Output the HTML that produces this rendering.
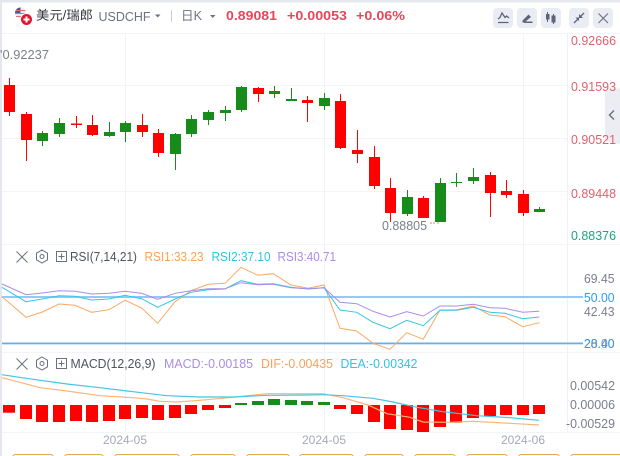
<!DOCTYPE html>
<html><head><meta charset="utf-8"><style>
html,body{margin:0;padding:0;background:#fff}
svg{display:block;font-family:"Liberation Sans","Noto Sans CJK SC",sans-serif}
</style></head><body>
<svg width="620" height="456" viewBox="0 0 620 456" xmlns="http://www.w3.org/2000/svg">
<rect width="620" height="456" fill="#fff"/>
<rect x="0" y="0" width="620" height="2.5" fill="#e4e7ee"/>
<rect x="0" y="0" width="2" height="456" fill="#e4e7ee"/>
<!-- grid -->
<g stroke="#f3f4f8" stroke-width="1" fill="none">
<path d="M2 33.5H620M2 244.5H620M2 352.5H620M2 432.5H620"/>
<path d="M2 85.5H567M2 138.5H567M2 191.5H567"/>
<path d="M125.5 33V432M324.5 33V432M523.5 33V432"/>
</g>
<path d="M567.5 33V432" stroke="#f0f1f5"/>
<!-- header -->
<circle cx="20.5" cy="13" r="5.5" fill="#e9e9f0"/>
<path d="M15 13a5.5 5.5 0 0 1 5.5-5.5v5.5z" fill="#4a5a8c"/>
<path d="M15.5 10.500h10M15 13.500h11M16 16.500h9" stroke="#e0707a" stroke-width="1"/>
<circle cx="26.500" cy="19.500" r="6.500" fill="#fff"/>
<circle cx="26.500" cy="19.500" r="5.500" fill="#e3142d"/>
<path d="M23.500 19.500h6M26.500 16.500v6" stroke="#fff" stroke-width="2"/>
<text x="36" y="19.500" font-size="12.500" fill="#33353d" textLength="57" lengthAdjust="spacingAndGlyphs">美元/瑞郎</text>
<text x="98.500" y="21" font-size="12.500" fill="#6d7280" textLength="52" lengthAdjust="spacingAndGlyphs">USDCHF</text>
<path d="M155 14.500h5.500l-2.750 3z" fill="#6d7280"/>
<path d="M171.500 10V22" stroke="#c9ccd6"/>
<text x="181" y="20" font-size="12.500" fill="#6d7280" textLength="21" lengthAdjust="spacingAndGlyphs">日K</text>
<path d="M210 15h5.500l-2.750 3z" fill="#6d7280"/>
<text x="226" y="20" font-size="12.500" font-weight="700" fill="#e2485a" textLength="51" lengthAdjust="spacingAndGlyphs">0.89081</text>
<text x="287" y="20" font-size="12.500" font-weight="700" fill="#e2485a" textLength="60" lengthAdjust="spacingAndGlyphs">+0.00053</text>
<text x="356" y="20" font-size="12.500" font-weight="700" fill="#e2485a" textLength="49" lengthAdjust="spacingAndGlyphs">+0.06%</text>
<!-- toolbar -->
<g fill="#e9ecf2">
<rect x="493" y="8" width="20" height="20" rx="4"/>
<rect x="517" y="8" width="20" height="20" rx="4"/>
<rect x="541" y="8" width="20" height="20" rx="4"/>
<rect x="569" y="8" width="20" height="20" rx="4"/>
<rect x="593" y="8" width="20" height="20" rx="4"/>
</g>
<path d="M498 19l2-1.500 2-4.500 3 4.500 1.500-1.500 2.500 2M498 22.500h10.500" fill="none" stroke="#5e6375" stroke-width="1.300"/>
<path d="M522 23h10.500v-1.500H526zM522.500 20.500l6-6 2.500 2.500-6 5h-2.500z" fill="#5e6375"/>
<path d="M547.500 12v10M553.500 14v10" stroke="#5e6375" stroke-width="1"/>
<rect x="546" y="14" width="3.500" height="5.500" fill="#5e6375"/>
<rect x="551.500" y="15.500" width="4" height="7" fill="#5e6375"/>
<path d="M574 23l4.500-4.500M584 13l-4.500 4.500" stroke="#5e6375" stroke-width="1.300"/>
<path d="M575.500 17.500h3.500v3.500zM579 14v4h4z" fill="#5e6375"/>
<path d="M598.500 13.500l9.500 9.500M608 13.500l-9.500 9.500" stroke="#6b7080" stroke-width="1.100"/>
<!-- hi label -->
<text x="0" y="59" font-size="12.500" fill="#7b7f8e" textLength="49" lengthAdjust="spacingAndGlyphs">'0.92237</text>
<text x="382" y="230" font-size="12.500" fill="#7b7f8e" textLength="45" lengthAdjust="spacingAndGlyphs">0.88805</text>
<path d="M431 222v2M434 222v2M438 222v2" stroke="#9a9eac" stroke-width="1"/>
<!-- candles red -->
<g fill="#ff0000">
<rect x="4" y="85" width="11" height="27"/><rect x="9" y="78" width="1" height="38"/>
<rect x="21" y="114" width="11" height="26"/><rect x="26" y="112" width="1" height="49"/>
<rect x="71" y="123.500" width="11" height="1.500"/><rect x="76" y="116" width="1" height="12"/>
<rect x="87" y="125" width="11" height="10"/><rect x="92" y="115" width="1" height="21"/>
<rect x="137" y="125" width="11" height="7"/><rect x="142" y="114" width="1" height="23"/>
<rect x="153" y="133" width="11" height="20"/><rect x="158" y="129" width="1" height="28"/>
<rect x="253" y="88" width="11" height="6"/><rect x="258" y="87" width="1" height="15"/>
<rect x="302" y="100" width="11" height="3"/><rect x="307" y="96" width="1" height="26"/>
<rect x="335" y="101" width="11" height="47"/><rect x="340" y="94" width="1" height="55"/>
<rect x="352" y="150" width="11" height="4"/><rect x="357" y="130" width="1" height="33"/>
<rect x="369" y="157" width="11" height="29"/><rect x="374" y="146" width="1" height="43"/>
<rect x="385" y="188" width="11" height="25"/><rect x="390" y="178" width="1" height="44"/>
<rect x="418" y="198" width="11" height="20"/><rect x="423" y="196" width="1" height="22"/>
<rect x="485" y="175" width="11" height="18"/><rect x="490" y="172" width="1" height="45"/>
<rect x="501" y="191" width="11" height="4"/><rect x="506" y="180" width="1" height="18"/>
<rect x="518" y="194" width="11" height="19"/><rect x="523" y="190" width="1" height="26"/>
</g>
<!-- candles green -->
<g fill="#188c1a">
<rect x="37" y="133" width="11" height="8"/><rect x="42" y="131" width="1" height="15"/>
<rect x="54" y="123" width="11" height="11"/><rect x="59" y="118" width="1" height="19"/>
<rect x="104" y="132" width="11" height="4"/><rect x="109" y="122" width="1" height="15"/>
<rect x="120" y="123" width="11" height="9"/><rect x="125" y="121" width="1" height="21"/>
<rect x="170" y="134" width="11" height="20"/><rect x="175" y="133" width="1" height="37"/>
<rect x="186" y="119" width="11" height="15"/><rect x="191" y="115" width="1" height="22"/>
<rect x="203" y="112" width="11" height="8"/><rect x="208" y="110" width="1" height="15"/>
<rect x="220" y="110" width="11" height="3"/><rect x="225" y="106" width="1" height="15"/>
<rect x="236" y="87" width="11" height="23"/><rect x="241" y="86" width="1" height="26"/>
<rect x="269" y="91" width="11" height="3"/><rect x="274" y="86" width="1" height="12"/>
<rect x="286" y="99" width="11" height="2"/><rect x="291" y="88" width="1" height="13"/>
<rect x="319" y="98" width="11" height="8"/><rect x="324" y="93" width="1" height="17"/>
<rect x="402" y="197" width="11" height="17"/><rect x="407" y="190" width="1" height="26"/>
<rect x="435" y="183" width="11" height="39"/><rect x="440" y="178" width="1" height="44"/>
<rect x="451" y="182" width="11" height="1"/><rect x="456" y="173" width="1" height="14"/>
<rect x="468" y="177" width="11" height="4"/><rect x="473" y="168" width="1" height="16"/>
<rect x="534" y="209" width="11" height="3"/><rect x="539" y="207" width="1" height="5"/>
</g>
<!-- price axis -->
<polygon points="605,91 620,88 620,144 605,141" fill="#ecedf2"/>
<path d="M614 110.500l-4.500 4.500 4.500 4.500" fill="none" stroke="#6f7486" stroke-width="1.500"/>
<g font-size="12.500" fill="#e2606e">
<text x="571" y="45" textLength="45" lengthAdjust="spacingAndGlyphs">0.92666</text>
<text x="571" y="91" textLength="45" lengthAdjust="spacingAndGlyphs">0.91593</text>
<text x="571" y="144" textLength="45" lengthAdjust="spacingAndGlyphs">0.90521</text>
<text x="571" y="198" textLength="45" lengthAdjust="spacingAndGlyphs">0.89448</text>
<text x="571" y="240" fill="#1aa583" textLength="45" lengthAdjust="spacingAndGlyphs">0.88376</text>
</g>
<!-- RSI header -->
<path d="M16.500 251.500l11 11M27.500 251.500l-11 11" stroke="#6b7080" stroke-width="1"/>
<path d="M42 250l5.500 3.200v6.600L42 263l-5.500-3.200v-6.600z" fill="none" stroke="#6b7080"/>
<circle cx="42" cy="256.500" r="2" fill="none" stroke="#6b7080"/>
<rect x="56.500" y="251.500" width="10" height="10" fill="none" stroke="#6b7080"/>
<path d="M58.500 256.500h6M61.500 253.500v6" stroke="#6b7080"/>
<text x="70" y="261" font-size="12.500" fill="#4f5260" textLength="67" lengthAdjust="spacingAndGlyphs">RSI(7,14,21)</text>
<text x="144.500" y="261" font-size="12.500" fill="#fba15c" textLength="59" lengthAdjust="spacingAndGlyphs">RSI1:33.23</text>
<text x="211.500" y="261" font-size="12.500" fill="#2ec5e0" textLength="59" lengthAdjust="spacingAndGlyphs">RSI2:37.10</text>
<text x="277.500" y="261" font-size="12.500" fill="#a98de6" textLength="58.500" lengthAdjust="spacingAndGlyphs">RSI3:40.71</text>
<!-- RSI lines -->
<rect x="2" y="296" width="581" height="2" fill="#90caf9"/>
<rect x="2" y="342.500" width="581" height="1.500" fill="#64b0ee"/>
<rect x="2" y="344" width="581" height="1" fill="#cfe6fa"/>
<polyline fill="none" stroke="#fba961" stroke-width="1" points="2,296.700 26,317.300 42.300,312 59,304 75,305.300 91.700,312.300 109,309.700 125,300.300 141.700,308 157.700,323.300 175,301.700 191,290.700 208.300,284.300 225,283.300 241,267.300 257.700,275.300 273.300,273.700 291,285 308.300,288.300 324,285 340,328.300 356.700,331 373,343.300 390,349.300 406.700,332.700 423.300,339.300 440,310 456.700,309.700 473.300,306 490,315 505,316.700 522.700,326.700 539.300,322.700"/>
<polyline fill="none" stroke="#34c6e0" stroke-width="1" points="2,287.300 26,301.700 42.300,299 59,295.700 75,296.300 91.700,300 109,299 125,295.300 141.700,298.700 157.700,307.300 175,299 191,292.300 208.300,289.700 225,289 241,280.700 257.700,284.300 273.300,283.700 291,287.300 308.300,289 324,287.700 340,310 356.700,312.300 373,322.300 390,328.700 406.700,320.300 423.300,325.700 440,310.300 456.700,310.300 473.300,307.300 490,312.300 505,313.300 522.700,318.700 539.300,317"/>
<polyline fill="none" stroke="#a98de6" stroke-width="1" points="2,284 26,294.700 42.300,293 59,290.700 75,291.300 91.700,294 109,293.300 125,291.300 141.700,293.300 157.700,299.300 175,293.300 191,290.700 208.300,288.700 225,288.700 241,282.700 257.700,284.700 273.300,284.300 291,287.700 308.300,288.700 324,287.700 340,302.300 356.700,303.700 373,311.300 390,317 406.700,311.700 423.300,316 440,306 456.700,306 473.300,304.300 490,307.700 505,308.300 522.700,312.300 539.300,311.300"/>
<g font-size="12.500">
<text x="584" y="283" fill="#7b7f8e" textLength="30.500" lengthAdjust="spacingAndGlyphs">69.45</text>
<text x="584" y="302" fill="#2f9bf0" textLength="30.500" lengthAdjust="spacingAndGlyphs">50.00</text>
<text x="584" y="316" fill="#7b7f8e" textLength="30.500" lengthAdjust="spacingAndGlyphs">42.43</text>
<text x="584" y="348" fill="#7b7f8e" textLength="30.500" lengthAdjust="spacingAndGlyphs">28.40</text>
<text x="584" y="348" fill="#2f9bf0" fill-opacity=".85" textLength="30.500" lengthAdjust="spacingAndGlyphs">20.00</text>
</g>
<!-- MACD header -->
<path d="M16.500 358.500l11 11M27.500 358.500l-11 11" stroke="#6b7080" stroke-width="1"/>
<path d="M42 357l5.500 3.200v6.600L42 370l-5.500-3.200v-6.600z" fill="none" stroke="#6b7080"/>
<circle cx="42" cy="363.500" r="2" fill="none" stroke="#6b7080"/>
<rect x="56.500" y="358.500" width="10" height="10" fill="none" stroke="#6b7080"/>
<path d="M58.500 363.500h6M61.500 360.500v6" stroke="#6b7080"/>
<text x="70.500" y="368" font-size="12.500" fill="#4f5260" textLength="85" lengthAdjust="spacingAndGlyphs">MACD(12,26,9)</text>
<text x="164" y="368" font-size="12.500" fill="#a98de6" textLength="89" lengthAdjust="spacingAndGlyphs">MACD:-0.00185</text>
<text x="261" y="368" font-size="12.500" fill="#fba15c" textLength="72" lengthAdjust="spacingAndGlyphs">DIF:-0.00435</text>
<text x="340.500" y="368" font-size="12.500" fill="#2ec5e0" textLength="77" lengthAdjust="spacingAndGlyphs">DEA:-0.00342</text>
<!-- MACD hist -->
<g fill="#ff0000">
<rect x="3" y="405" width="12" height="7.700"/><rect x="20" y="405" width="12" height="14"/>
<rect x="36" y="405" width="12" height="17"/><rect x="53" y="405" width="12" height="17"/>
<rect x="70" y="405" width="12" height="16"/><rect x="86" y="405" width="12" height="17"/>
<rect x="103" y="405" width="12" height="16"/><rect x="119" y="405" width="12" height="14"/>
<rect x="136" y="405" width="12" height="13"/><rect x="152" y="405" width="12" height="15"/>
<rect x="169" y="405" width="12" height="13"/><rect x="185" y="405" width="12" height="9"/>
<rect x="202" y="405" width="12" height="5"/><rect x="219" y="405" width="12" height="3"/>
<rect x="334" y="405" width="12" height="4"/><rect x="351" y="405" width="12" height="9"/>
<rect x="368" y="405" width="12" height="17"/><rect x="384" y="405" width="12" height="24"/>
<rect x="401" y="405" width="12" height="25"/><rect x="417" y="405" width="12" height="27"/>
<rect x="434" y="405" width="12" height="22"/><rect x="450" y="405" width="12" height="17.700"/>
<rect x="467" y="405" width="12" height="13"/><rect x="484" y="405" width="12" height="11"/>
<rect x="500" y="405" width="12" height="10"/><rect x="517" y="405" width="12" height="10"/>
<rect x="533" y="405" width="12" height="9"/>
</g>
<g fill="#188c1a">
<rect x="235" y="403" width="12" height="2"/><rect x="252" y="401" width="12" height="4"/>
<rect x="268" y="399" width="12" height="6"/><rect x="285" y="400" width="12" height="5"/>
<rect x="301" y="401" width="12" height="4"/><rect x="318" y="402" width="12" height="3"/>
</g>
<polyline fill="none" stroke="#fbb57a" stroke-width="1.200" points="2,377.700 20,382.300 40,387.700 67,391 100,395.700 133,397.700 147,399 160,401.300 177,402 200,400.300 233,397.300 267,393.700 308,393.700 323,393.700 343,397.700 368,405 387,413.700 410,417.300 423,422 450,422.300 473,421.300 510,423.300 539,425"/>
<polyline fill="none" stroke="#45c6de" stroke-width="1.200" points="2,374.700 33,379.300 67,384 100,387.700 133,391.700 167,395.700 200,397 233,397 267,395.300 308,395 323,394.700 343,395.700 373,398.300 393,402 417,407.300 443,411.700 477,415.700 510,417.700 539,420.300"/>
<g font-size="12.500" fill="#7b7f8e">
<text x="570" y="390" textLength="45" lengthAdjust="spacingAndGlyphs">0.00542</text>
<text x="570" y="409" textLength="45" lengthAdjust="spacingAndGlyphs">0.00006</text>
<text x="566" y="428" textLength="49" lengthAdjust="spacingAndGlyphs">-0.00529</text>
</g>
<g font-size="12" fill="#a5a9b8">
<text x="103" y="444" textLength="44" lengthAdjust="spacingAndGlyphs">2024-05</text>
<text x="302" y="444" textLength="44" lengthAdjust="spacingAndGlyphs">2024-05</text>
<text x="501" y="444" textLength="44" lengthAdjust="spacingAndGlyphs">2024-06</text>
</g>
<!-- bottom buttons -->
<g fill="none" stroke="#e0a84f" stroke-width="1">
<rect x="12.500" y="454.500" width="41" height="12" rx="3"/>
<rect x="64.500" y="454.500" width="39" height="12" rx="3"/>
<rect x="114.500" y="454.500" width="65" height="12" rx="3"/>
<rect x="190.500" y="454.500" width="45" height="12" rx="3"/>
<rect x="246.500" y="454.500" width="43" height="12" rx="3"/>
<rect x="299.500" y="454.500" width="54" height="12" rx="3"/>
<rect x="364.500" y="454.500" width="39" height="12" rx="3"/>
<rect x="414.500" y="454.500" width="41" height="12" rx="3"/>
<rect x="466.500" y="454.500" width="41" height="12" rx="3"/>
<rect x="518.500" y="454.500" width="41" height="12" rx="3"/>
<rect x="570.500" y="454.500" width="60" height="12" rx="3"/>
</g>
</svg>
</body></html>
